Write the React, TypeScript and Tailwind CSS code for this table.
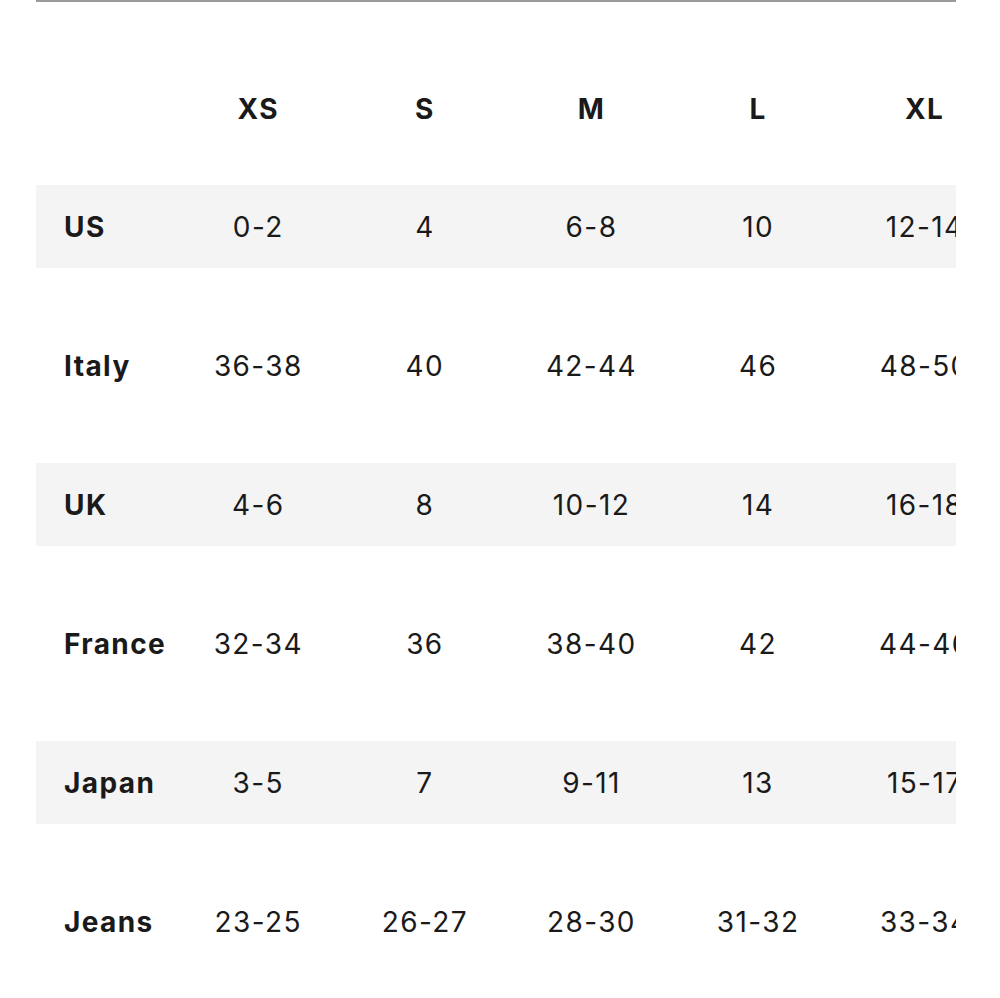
const sizes = ["XS", "S", "M", "L", "XL"];

const rows = [
  { name: "US", values: ["0-2", "4", "6-8", "10", "12-14"] },
  { name: "Italy", values: ["36-38", "40", "42-44", "46", "48-50"] },
  { name: "UK", values: ["4-6", "8", "10-12", "14", "16-18"] },
  { name: "France", values: ["32-34", "36", "38-40", "42", "44-46"] },
  { name: "Japan", values: ["3-5", "7", "9-11", "13", "15-17"] },
  { name: "Jeans", values: ["23-25", "26-27", "28-30", "31-32", "33-34"] },
];

export default function App() {
  return (
    <div
      className="min-h-[998px] bg-white text-[#1a1a1a]"
      style={{ fontFamily: "Inter, 'Liberation Sans', sans-serif" }}
    >
      <div className="ml-[36px] w-[920px] overflow-hidden">
        <div className="h-[2px] bg-[#9a9a9a]" />

        {/* header */}
        <div className="mt-[65px] flex h-[83px] w-[972px] items-center text-[28px] font-bold tracking-[0.05em]">
          <div className="w-[139px] shrink-0" />
          {sizes.map((s) => (
            <div key={s} className="w-[166.6px] shrink-0 text-center">
              {s}
            </div>
          ))}
        </div>

        <div className="mt-[35px] flex flex-col gap-[56px]">
          {rows.map((row, i) => (
            <div
              key={row.name}
              className={`flex h-[83px] w-[972px] items-center text-[28px] tracking-[0.05em] ${
                i % 2 === 0 ? "bg-[#f4f4f4]" : ""
              }`}
            >
              <div className="w-[139px] shrink-0 pl-[28px] font-bold">{row.name}</div>
              {row.values.map((v, j) => (
                <div key={j} className="w-[166.6px] shrink-0 text-center font-normal">
                  {v}
                </div>
              ))}
            </div>
          ))}
        </div>
      </div>
    </div>
  );
}
